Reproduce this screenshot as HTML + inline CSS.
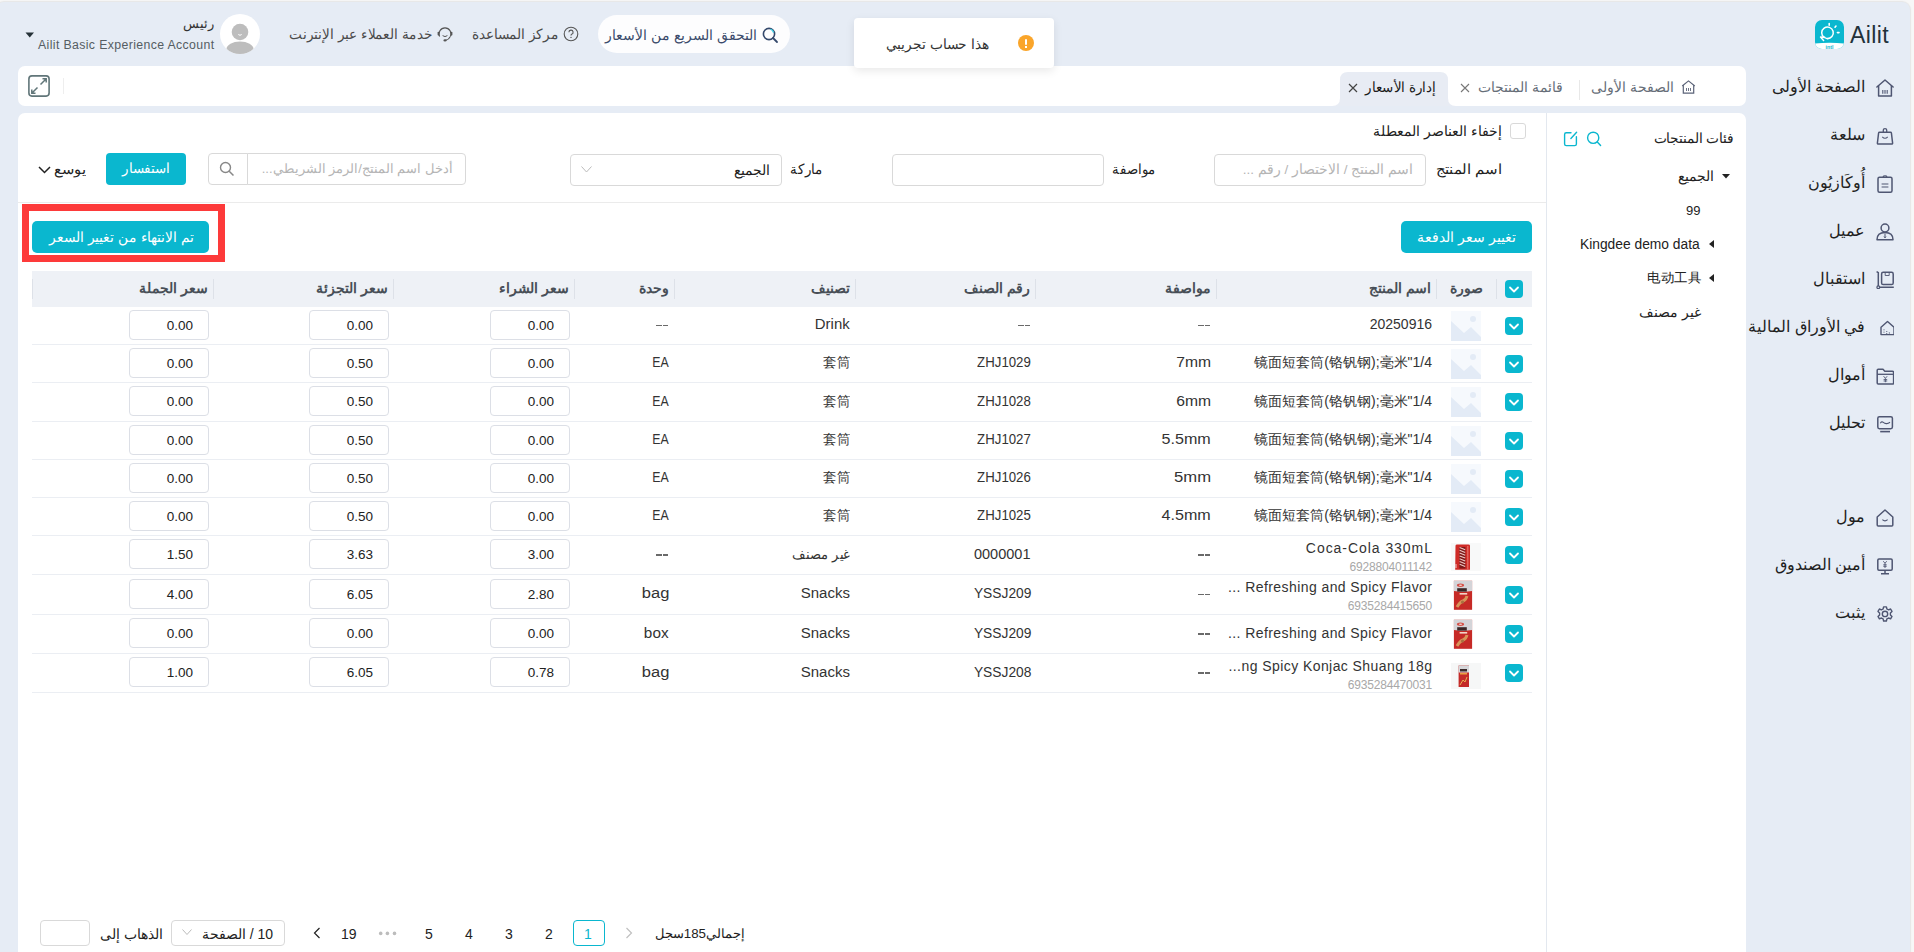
<!DOCTYPE html>
<html><head><meta charset="utf-8"><style>
*{box-sizing:border-box;margin:0;padding:0}
html,body{width:1914px;height:952px;overflow:hidden;background:#f7f7f7;font-family:"Liberation Sans", sans-serif;}
.a{position:absolute}
#app{position:absolute;left:-4px;top:2px;width:1914px;height:960px;background:#e6ecf5;border-radius:8px;box-shadow:0 0 1px 1px #e6e6e6;}
.t{position:absolute;white-space:nowrap;line-height:1;}
.r{direction:rtl;text-align:right}
.card{position:absolute;background:#fff}
.inp{position:absolute;background:#fff;border:1px solid #d9d9d9;border-radius:4px}
.btn{position:absolute;background:#0ab7cf;border-radius:4px;color:#fff}
.cb{position:absolute;width:18px;height:18px;background:#0ab7cf;border-radius:4px}
.sep{position:absolute;width:1px;background:#dde1e8}
</style></head>
<body><div id="app"></div>
<div class="a" style="left:1815px;top:20px;width:29px;height:29px;border-radius:7px;background:#0ab7cf;overflow:hidden">
<svg width="29" height="29" viewBox="0 0 29 29" style="position:absolute;left:0;top:0">
<path d="M9.2 17.6 A5.8 5.8 0 1 1 12 18.6" fill="none" stroke="#fff" stroke-width="1.5"/>
<path d="M9.3 16.5 Q9.5 18 12.5 18.8 M9.8 17.5 L5.5 17 L9 21" fill="none" stroke="#fff" stroke-width="1.4" stroke-linejoin="round"/>
<path d="M14.2 3.6 v1.6 M21 6 l-1 1.2 M24 12.6 h-1.6" stroke="#fff" stroke-width="1.6" stroke-linecap="round"/>
<path d="M0 23.5 Q14.5 21.8 29 23.5 V29 H0Z" fill="#fff"/>
<text x="14.5" y="28.6" font-size="5.2" font-family="Liberation Sans" font-weight="bold" fill="#0ab7cf" text-anchor="middle">intl</text>
</svg></div>
<div class="t" style="left:1850px;top:24px;font-size:23px;letter-spacing:0.4px;color:#22313a;">Ailit</div>
<div class="a" style="left:598px;top:15px;width:192px;height:38px;border-radius:19px;background:#fdfdfe"></div>
<svg class="a" style="left:762px;top:27px" width="17" height="17" viewBox="0 0 17 17"><circle cx="7" cy="7" r="5.6" fill="none" stroke="#34486b" stroke-width="1.6"/><path d="M8.5 2.2 A5 5 0 0 1 11.6 5.5" fill="none" stroke="#3ad0e6" stroke-width="1.4"/><path d="M11 11 L15 15" stroke="#34486b" stroke-width="1.8" stroke-linecap="round"/></svg>
<div class="t r" style="right:1157px;top:28px;font-size:14px;color:#3b4b6b;">التحقق السريع من الأسعار</div>
<svg class="a" style="left:563px;top:26px" width="16" height="16" viewBox="0 0 16 16"><circle cx="8" cy="8" r="6.8" fill="none" stroke="#555" stroke-width="1.1"/><path d="M5.9 6.2 A2.1 2.1 0 1 1 8.6 8.2 Q8 8.5 8 9.4" fill="none" stroke="#555" stroke-width="1.1"/><circle cx="8" cy="11.4" r="0.7" fill="#555"/></svg>
<div class="t r" style="right:1355px;top:27px;font-size:14px;color:#4a4a4a;transform:scaleX(0.976);transform-origin:100% 50%;">مركز المساعدة</div>
<svg class="a" style="left:437px;top:26px" width="17" height="17" viewBox="0 0 17 17"><path d="M2.6 10.5 A6 6 0 1 1 13.4 10.5" fill="none" stroke="#555" stroke-width="1.2"/><rect x="0.6" y="5.8" width="2" height="3.8" rx="0.8" fill="#555"/><rect x="13.4" y="5.8" width="2" height="3.8" rx="0.8" fill="#555"/><path d="M5.6 9.6 Q8 11.6 10.4 9.6" fill="none" stroke="#555" stroke-width="1"/><path d="M13.2 10.6 Q12 13.6 8.6 14.3" fill="none" stroke="#555" stroke-width="1.2"/><ellipse cx="8" cy="14.4" rx="1.6" ry="1.1" fill="#555"/></svg>
<div class="t r" style="right:1481px;top:27px;font-size:14px;color:#4a4a4a;transform:scaleX(0.973);transform-origin:100% 50%;">خدمة العملاء عبر الإنترنت</div>
<div class="a" style="left:220px;top:14px;width:40px;height:40px;border-radius:50%;background:#fff;overflow:hidden">
<svg width="40" height="40" viewBox="0 0 40 40"><circle cx="20" cy="18" r="8.3" fill="#bdbdbd"/><path d="M18.3 20.5 q1.7 1.6 3.4 0" stroke="#fff" stroke-width="1" fill="none"/><ellipse cx="20" cy="35" rx="13.5" ry="7.5" fill="#bdbdbd"/></svg></div>
<div class="t r" style="right:1700px;top:17px;font-size:13px;color:#333;">رئيس</div>
<div class="t" style="left:38px;top:39px;font-size:12.3px;color:#555d63;letter-spacing:0.37px">Ailit Basic Experience Account</div>
<svg class="a" style="left:25px;top:32px" width="10" height="6" viewBox="0 0 10 6"><path d="M0.5 0.5 H9 L4.75 5.5Z" fill="#263238"/></svg>
<div class="card" style="left:18px;top:66px;width:1728px;height:40px;border-radius:7px"></div>
<svg class="a" style="left:28px;top:75px" width="22" height="22" viewBox="0 0 22 22"><rect x="0.9" y="0.9" width="20.2" height="20.2" rx="3" fill="none" stroke="#617679" stroke-width="1.6"/><path d="M12.5 9.5 L18 4 M14.5 3.8 H18.2 V7.5 M9.5 12.5 L4 18 M3.8 14.5 V18.2 H7.5" fill="none" stroke="#617679" stroke-width="1.5"/></svg>
<div class="a" style="left:63px;top:78px;width:1px;height:16px;background:#eee"></div>
<svg class="a" style="left:1332px;top:72px" width="124" height="34" viewBox="0 0 124 34"><path d="M0 34 Q8 34 8 26 V8 Q8 0 16 0 H108 Q116 0 116 8 V26 Q116 34 124 34 Z" fill="#e8ecf4"/></svg>
<svg class="a" style="left:1348px;top:83px" width="10" height="10" viewBox="0 0 10 10"><path d="M1 1 L9 9 M9 1 L1 9" stroke="#444" stroke-width="1.2"/></svg>
<div class="t r" style="right:478px;top:80px;font-size:14px;color:#1a1a1a;transform:scaleX(0.960);transform-origin:100% 50%;">إدارة الأسعار</div>
<svg class="a" style="left:1460px;top:83px" width="10" height="10" viewBox="0 0 10 10"><path d="M1 1 L9 9 M9 1 L1 9" stroke="#777" stroke-width="1.1"/></svg>
<div class="t r" style="right:351px;top:80px;font-size:14px;color:#666e78;">قائمة المنتجات</div>
<div class="a" style="left:1579px;top:80px;width:1px;height:20px;background:#e8e8e8"></div>
<svg class="a" style="left:1681px;top:80px" width="15" height="14" viewBox="0 0 15 14"><path d="M1.2 6 L7.5 0.9 L13.8 6 M2.3 5.2 V13.2 H12.7 V5.2" fill="none" stroke="#5b6378" stroke-width="1.2"/><path d="M5.5 8 v3 M7.5 8 v3 M9.5 8 v3" stroke="#5b6378" stroke-width="0.9"/></svg>
<div class="t r" style="right:240px;top:80px;font-size:14px;color:#666e78;">الصفحة الأولى</div>
<svg class="a" style="left:1876px;top:79px" width="18" height="18" viewBox="0 0 18 18"><path d="M0.9 8 L9 1 L17.1 8" fill="none" stroke="#4f5672" stroke-width="1.5" stroke-linejoin="round" stroke-linecap="round"/><path d="M2.6 6.6 V17 H15.4 V6.6" fill="none" stroke="#4f5672" stroke-width="1.5" stroke-linejoin="round"/><path d="M6.8 11 v3.8 M9 11 v3.8 M11.2 11 v3.8" stroke="#4f5672" stroke-width="1.1"/></svg>
<div class="t r" style="right:49px;top:79px;font-size:16px;color:#1f1f1f;">الصفحة الأولى</div>
<svg class="a" style="left:1876px;top:127px" width="18" height="18" viewBox="0 0 18 18"><path d="M3.6 5.2 H14.4 Q15.3 5.2 15.4 6 L16.6 16 Q16.7 17 15.7 17 H2.3 Q1.3 17 1.4 16 L2.6 6 Q2.7 5.2 3.6 5.2Z" fill="none" stroke="#4f5672" stroke-width="1.5" stroke-linejoin="round"/><path d="M7.3 5.2 V3 Q7.3 1.6 9 1.6 Q10.7 1.6 10.7 3 V5.2" fill="none" stroke="#4f5672" stroke-width="1.3"/><path d="M6.3 9.8 Q9 12.6 11.7 9.8" fill="none" stroke="#4f5672" stroke-width="1.1"/></svg>
<div class="t r" style="right:49px;top:127px;font-size:16px;color:#1f1f1f;">سلعة</div>
<svg class="a" style="left:1876px;top:175px" width="18" height="18" viewBox="0 0 18 18"><rect x="2" y="2.2" width="14" height="15" rx="1.5" fill="none" stroke="#4f5672" stroke-width="1.5"/><path d="M7.3 2.5 V1.6 Q7.3 0.8 9 0.8 Q10.7 0.8 10.7 1.6 V2.5" fill="none" stroke="#4f5672" stroke-width="1.2"/><path d="M5.6 9 H12.4 M5.6 12 H12.4" stroke="#4f5672" stroke-width="1.2"/></svg>
<div class="t r" style="right:49px;top:175px;font-size:16px;color:#1f1f1f;">أُوكَازيُون</div>
<svg class="a" style="left:1876px;top:223px" width="18" height="18" viewBox="0 0 18 18"><circle cx="9" cy="5" r="3.9" fill="none" stroke="#4f5672" stroke-width="1.5"/><path d="M1 16.8 Q1 9.6 9 9.6 Q17 9.6 17 16.8 Z" fill="none" stroke="#4f5672" stroke-width="1.5" stroke-linejoin="round"/><path d="M9 10.5 V14.8 M8 13.6 L9 14.8 L10 13.6" fill="none" stroke="#4f5672" stroke-width="1"/></svg>
<div class="t r" style="right:49px;top:223px;font-size:16px;color:#1f1f1f;">عميل</div>
<svg class="a" style="left:1876px;top:271px" width="18" height="18" viewBox="0 0 18 18"><path d="M0.6 0.6 L2.3 1.6 V16.3 H17.8" fill="none" stroke="#4f5672" stroke-width="1.5"/><rect x="5.6" y="1.3" width="11.6" height="12.2" rx="1.6" fill="none" stroke="#4f5672" stroke-width="1.5"/><path d="M9.2 1.5 V4.5 H13.2 V1.5" fill="none" stroke="#4f5672" stroke-width="0.9"/><circle cx="2.3" cy="16.3" r="1.4" fill="#e6ecf5" stroke="#4f5672" stroke-width="1.2"/></svg>
<div class="t r" style="right:49px;top:271px;font-size:16px;color:#1f1f1f;">استقبال</div>
<svg class="a" style="left:1876px;top:319px" width="18" height="18" viewBox="0 0 18 18"><path d="M5 8.2 L11.5 2.4 L18 8.2 V15.6 H5 Z" fill="none" stroke="#4f5672" stroke-width="1.4" stroke-linejoin="round"/><path d="M8 10.5 v0.8 M8 12.8 v0.8 M10.7 12 v0.8 M10.7 14 v0.8 M13.4 13.6 v0.8" stroke="#4f5672" stroke-width="1.2"/></svg>
<div class="t r" style="right:49px;top:319px;font-size:16px;color:#1f1f1f;">في الأوراق المالية</div>
<svg class="a" style="left:1876px;top:367px" width="18" height="18" viewBox="0 0 18 18"><path d="M1.2 3.2 Q1.2 2.2 2.2 2.2 H7 L8.8 4.2 H16.4 Q17.6 4.2 17.6 5.4 V16 Q17.6 17 16.6 17 H2.2 Q1.2 17 1.2 16 Z" fill="none" stroke="#4f5672" stroke-width="1.5" stroke-linejoin="round"/><path d="M1.2 7.3 H17.6" stroke="#4f5672" stroke-width="1.3"/><path d="M7.6 9.2 L9.4 11.3 L11.2 9.2 M9.4 11.3 V15.2 M7.6 12.6 H11.2 M7.6 14 H11.2" fill="none" stroke="#4f5672" stroke-width="0.9"/></svg>
<div class="t r" style="right:49px;top:367px;font-size:16px;color:#1f1f1f;">أموال</div>
<svg class="a" style="left:1876px;top:415px" width="18" height="18" viewBox="0 0 18 18"><rect x="1.8" y="1.7" width="14.6" height="12" rx="1.6" fill="none" stroke="#4f5672" stroke-width="1.5"/><path d="M4.2 16.6 H14" stroke="#4f5672" stroke-width="1.6"/><path d="M4.3 8.2 Q5.8 6 7.3 7.4 T10.6 8.6 T14 7.2" fill="none" stroke="#4f5672" stroke-width="1.1"/></svg>
<div class="t r" style="right:49px;top:415px;font-size:16px;color:#1f1f1f;">تحليل</div>
<svg class="a" style="left:1876px;top:509px" width="18" height="18" viewBox="0 0 18 18"><path d="M1.2 8 L9 1 L16.8 8 V16 Q16.8 17 15.8 17 H2.2 Q1.2 17 1.2 16 Z" fill="none" stroke="#4f5672" stroke-width="1.5" stroke-linejoin="round"/><path d="M6.4 10.6 Q9 13.2 11.6 10.6" fill="none" stroke="#4f5672" stroke-width="1.1"/></svg>
<div class="t r" style="right:49px;top:509px;font-size:16px;color:#1f1f1f;">مول</div>
<svg class="a" style="left:1876px;top:557px" width="18" height="18" viewBox="0 0 18 18"><rect x="1.8" y="2" width="14.4" height="11.2" rx="1.2" fill="none" stroke="#4f5672" stroke-width="1.5"/><path d="M9 13.2 V16.6 M5 16.8 H13" stroke="#4f5672" stroke-width="1.5"/><path d="M7.3 4.2 L9 6.3 L10.7 4.2 M9 6.3 V11 M7.3 7.8 H10.7 M7.3 9.3 H10.7" fill="none" stroke="#4f5672" stroke-width="0.9"/></svg>
<div class="t r" style="right:49px;top:557px;font-size:16px;color:#1f1f1f;">أمين الصندوق</div>
<svg class="a" style="left:1876px;top:605px" width="18" height="18" viewBox="0 0 18 18"><path d="M7.6 0.9 H10.4 L10.9 3 L12.6 3.9 L14.6 3 L16 5.4 L14.4 6.9 V8.9 L16 10.4 L14.6 12.8 L12.6 12 L10.9 12.9 L10.4 15 H7.6 L7.1 12.9 L5.4 12 L3.4 12.8 L2 10.4 L3.6 8.9 V6.9 L2 5.4 L3.4 3 L5.4 3.9 L7.1 3 Z" transform="translate(0,1)" fill="none" stroke="#4f5672" stroke-width="1.4" stroke-linejoin="round"/><circle cx="9" cy="8.9" r="2.7" fill="none" stroke="#4f5672" stroke-width="1.4"/></svg>
<div class="t r" style="right:49px;top:605px;font-size:16px;color:#1f1f1f;">يثبت</div>
<div class="card" style="left:18px;top:113px;width:1728px;height:850px;border-radius:7px"></div>
<div class="a" style="left:1546px;top:113px;width:1px;height:840px;background:#e3e8ef"></div>
<div class="t r" style="right:180px;top:131px;font-size:14px;color:#222;transform:scaleX(0.980);transform-origin:100% 50%;">فئات المنتجات</div>
<svg class="a" style="left:1563px;top:131px" width="15" height="16" viewBox="0 0 15 16"><path d="M8 1.8 H3.3 Q1.6 1.8 1.6 3.5 V12.9 Q1.6 14.6 3.3 14.6 H11.7 Q13.4 14.6 13.4 12.9 V5.8" fill="none" stroke="#0ab7cf" stroke-width="1.4" stroke-linecap="round"/><path d="M7.9 7.5 L13.6 1.2" stroke="#0ab7cf" stroke-width="1.4" stroke-linecap="round"/></svg>
<svg class="a" style="left:1586px;top:131px" width="16" height="16" viewBox="0 0 16 16"><circle cx="7.2" cy="6.8" r="5.6" fill="none" stroke="#0ab7cf" stroke-width="1.4"/><path d="M11.3 10.9 L14.6 14.4" stroke="#0ab7cf" stroke-width="1.4" stroke-linecap="round"/></svg>
<svg class="a" style="left:1722px;top:174px" width="8" height="5" viewBox="0 0 8 5"><path d="M0 0 H8 L4 4.5Z" fill="#222"/></svg>
<div class="t r" style="right:200px;top:169px;font-size:14px;color:#222;">الجميع</div>
<div class="t" style="left:1686px;top:204px;font-size:13px;color:#222;">99</div>
<svg class="a" style="left:1709px;top:240px" width="5" height="8" viewBox="0 0 5 8"><path d="M5 0 V8 L0 4Z" fill="#222"/></svg>
<div class="t" style="left:1580px;top:238px;font-size:13.8px;color:#222;">Kingdee demo data</div>
<svg class="a" style="left:1709px;top:274px" width="5" height="8" viewBox="0 0 5 8"><path d="M5 0 V8 L0 4Z" fill="#222"/></svg>
<div class="t" style="left:1646.5px;top:271px;font-size:13.4px;color:#222;transform:scaleX(1.04);transform-origin:0 50%;">电动工具</div>
<div class="t r" style="right:213px;top:305px;font-size:14px;color:#222;">غير مصنف</div>
<div class="inp" style="left:1510px;top:123px;width:16px;height:16px;border-radius:3px"></div>
<div class="t r" style="right:412px;top:124px;font-size:14px;color:#222;">إخفاء العناصر المعطلة</div>
<div class="t r" style="right:412px;top:162px;font-size:14px;color:#222;transform:scaleX(1.072);transform-origin:100% 50%;">اسم المنتج</div>
<div class="inp" style="left:1214px;top:154px;width:212px;height:32px"></div>
<div class="t r" style="right:501px;top:163px;font-size:13.5px;color:#b5b5b5;">اسم المنتج / الاختصار / رقم ...</div>
<div class="t r" style="right:758px;top:162px;font-size:14px;color:#222;transform:scaleX(0.948);transform-origin:100% 50%;">مواصفة</div>
<div class="inp" style="left:892px;top:154px;width:212px;height:32px"></div>
<div class="t r" style="right:1091px;top:162px;font-size:14px;color:#222;transform:scaleX(0.959);transform-origin:100% 50%;">ماركة</div>
<div class="inp" style="left:570px;top:154px;width:212px;height:32px"></div>
<div class="t r" style="right:1144px;top:163px;font-size:14px;color:#222;">الجميع</div>
<svg class="a" style="left:581px;top:166px" width="11" height="7" viewBox="0 0 11 7"><path d="M0.5 0.5 L5.5 6 L10.5 0.5" fill="none" stroke="#bbb" stroke-width="1"/></svg>
<div class="inp" style="left:208px;top:153px;width:40px;height:32px;border-radius:4px 0 0 4px"></div>
<svg class="a" style="left:219px;top:161px" width="16" height="16" viewBox="0 0 16 16"><circle cx="6.5" cy="6.5" r="5" fill="none" stroke="#888" stroke-width="1.4"/><path d="M10.2 10.2 L14.5 14.5" stroke="#888" stroke-width="1.5"/></svg>
<div class="inp" style="left:247px;top:153px;width:219px;height:32px;border-radius:0 4px 4px 0"></div>
<div class="t r" style="right:1461px;top:162px;font-size:13px;color:#b5b5b5;">أدخل اسم المنتج/الرمز الشريطي...</div>
<div class="btn" style="left:106px;top:153px;width:80px;height:32px"></div>
<div class="t r" style="right:1744px;top:161px;font-size:14px;color:#fff;transform:scaleX(0.954);transform-origin:100% 50%;">استفسار</div>
<div class="t r" style="right:1828px;top:162px;font-size:14px;color:#222;transform:scaleX(1.057);transform-origin:100% 50%;">يوسع</div>
<svg class="a" style="left:38px;top:166px" width="13" height="8" viewBox="0 0 13 8"><path d="M1 1 L6.5 6.5 L12 1" fill="none" stroke="#222" stroke-width="1.5"/></svg>
<div class="a" style="left:18px;top:202px;width:1528px;height:1px;background:#ebebeb"></div>
<div class="a" style="left:22px;top:204px;width:203px;height:58px;border:7px solid #fd3a3a"></div>
<div class="btn" style="left:32px;top:221px;width:177px;height:32px;border-radius:5px"></div>
<div class="t r" style="right:1720px;top:230px;font-size:14px;color:#fff;transform:scaleX(0.984);transform-origin:100% 50%;">تم الانتهاء من تغيير السعر</div>
<div class="btn" style="left:1401px;top:221px;width:131px;height:32px;border-radius:5px"></div>
<div class="t r" style="right:398px;top:230px;font-size:14px;color:#fff;">تغيير سعر الدفعة</div>
<div class="a" style="left:32px;top:271px;width:1500px;height:36px;background:#eef1f6"></div>
<div class="sep" style="left:1496px;top:279px;height:20px"></div>
<div class="sep" style="left:1436px;top:279px;height:20px"></div>
<div class="sep" style="left:1216px;top:279px;height:20px"></div>
<div class="sep" style="left:1035px;top:279px;height:20px"></div>
<div class="sep" style="left:855px;top:279px;height:20px"></div>
<div class="sep" style="left:674px;top:279px;height:20px"></div>
<div class="sep" style="left:574px;top:279px;height:20px"></div>
<div class="sep" style="left:393px;top:279px;height:20px"></div>
<div class="sep" style="left:213px;top:279px;height:20px"></div>
<div class="sep" style="left:32px;top:279px;height:20px"></div>
<div class="cb" style="left:1505px;top:280px"><svg width="18" height="18" viewBox="0 0 18 18" style="position:absolute;left:0;top:0"><path d="M5 7.5 L9 11.5 L13 7.5" fill="none" stroke="#fff" stroke-width="1.8" stroke-linecap="round" stroke-linejoin="round"/></svg></div>
<div class="t" style="left:1436px;width:60px;text-align:center;top:281px;font-size:14px;font-weight:bold;color:#484f57;">صورة</div>
<div class="t r" style="right:483px;top:281px;font-size:14px;font-weight:bold;color:#484f57;">اسم المنتج</div>
<div class="t r" style="right:703px;top:281px;font-size:14px;font-weight:bold;color:#484f57;">مواصفة</div>
<div class="t r" style="right:884px;top:281px;font-size:14px;font-weight:bold;color:#484f57;">رقم الصنف</div>
<div class="t r" style="right:1064px;top:281px;font-size:14px;font-weight:bold;color:#484f57;">تصنيف</div>
<div class="t r" style="right:1245px;top:281px;font-size:14px;font-weight:bold;color:#484f57;">وحدة</div>
<div class="t r" style="right:1345px;top:281px;font-size:14px;font-weight:bold;color:#484f57;">سعر الشراء</div>
<div class="t r" style="right:1526px;top:281px;font-size:14px;font-weight:bold;color:#484f57;">سعر التجزئة</div>
<div class="t r" style="right:1706px;top:281px;font-size:14px;font-weight:bold;color:#484f57;">سعر الجملة</div>
<div class="a" style="left:32px;top:344px;width:1500px;height:1px;background:#ebeef3"></div>
<div class="cb" style="left:1505px;top:317px"><svg width="18" height="18" viewBox="0 0 18 18" style="position:absolute;left:0;top:0"><path d="M5 7.5 L9 11.5 L13 7.5" fill="none" stroke="#fff" stroke-width="1.8" stroke-linecap="round" stroke-linejoin="round"/></svg></div>
<div class="a" style="left:1451px;top:311px;width:30px;height:30px"><svg width="30" height="30" viewBox="0 0 30 30"><rect width="30" height="30" fill="#f6f9fd"/><path d="M0 10 L13 22 L20 16 L30 26 V30 H0Z" fill="#e3ebf6"/><circle cx="22" cy="8" r="3" fill="#e3ebf6"/></svg></div>
<div class="t" style="right:482.00px;top:317px;font-size:14px;color:#333;letter-spacing:0px">20250916</div>
<div class="a" style="left:1197.9px;top:324.5px;width:5.7px;height:1.6px;background:#6a6a6a"></div>
<div class="a" style="left:1204.8px;top:324.5px;width:5.7px;height:1.6px;background:#6a6a6a"></div>
<div class="a" style="left:1017.9px;top:324.5px;width:5.7px;height:1.6px;background:#6a6a6a"></div>
<div class="a" style="left:1024.8px;top:324.5px;width:5.7px;height:1.6px;background:#6a6a6a"></div>
<div class="t" style="right:1064px;top:317px;font-size:14px;color:#333;transform:scaleX(1.066);transform-origin:100% 50%;">Drink</div>
<div class="a" style="left:655.9px;top:324.5px;width:5.7px;height:1.6px;background:#6a6a6a"></div>
<div class="a" style="left:662.8px;top:324.5px;width:5.7px;height:1.6px;background:#6a6a6a"></div>
<div class="inp" style="left:490px;top:310px;width:80px;height:30px;border-color:#dcdfe6"></div>
<div class="t" style="right:1360px;top:319px;font-size:13.5px;color:#222;">0.00</div>
<div class="inp" style="left:309px;top:310px;width:80px;height:30px;border-color:#dcdfe6"></div>
<div class="t" style="right:1541px;top:319px;font-size:13.5px;color:#222;">0.00</div>
<div class="inp" style="left:129px;top:310px;width:80px;height:30px;border-color:#dcdfe6"></div>
<div class="t" style="right:1721px;top:319px;font-size:13.5px;color:#222;">0.00</div>
<div class="a" style="left:32px;top:382px;width:1500px;height:1px;background:#ebeef3"></div>
<div class="cb" style="left:1505px;top:355px"><svg width="18" height="18" viewBox="0 0 18 18" style="position:absolute;left:0;top:0"><path d="M5 7.5 L9 11.5 L13 7.5" fill="none" stroke="#fff" stroke-width="1.8" stroke-linecap="round" stroke-linejoin="round"/></svg></div>
<div class="a" style="left:1451px;top:349px;width:30px;height:30px"><svg width="30" height="30" viewBox="0 0 30 30"><rect width="30" height="30" fill="#f6f9fd"/><path d="M0 10 L13 22 L20 16 L30 26 V30 H0Z" fill="#e3ebf6"/><circle cx="22" cy="8" r="3" fill="#e3ebf6"/></svg></div>
<div class="t" style="right:482.00px;top:355px;font-size:14px;color:#333;letter-spacing:0px">镜面短套筒(铬钒钢);毫米"1/4</div>
<div class="t" style="right:703px;top:355px;font-size:14px;color:#333;transform:scaleX(1.12);transform-origin:100% 50%;">7mm</div>
<div class="t" style="right:883px;top:355px;font-size:14px;color:#333;transform:scaleX(0.945);transform-origin:100% 50%;">ZHJ1029</div>
<div class="t" style="right:1064px;top:355px;font-size:14px;color:#333;transform:scaleX(0.957);transform-origin:100% 50%;">套筒</div>
<div class="t" style="right:1245px;top:355px;font-size:14px;color:#333;transform:scaleX(0.88);transform-origin:100% 50%;">EA</div>
<div class="inp" style="left:490px;top:348px;width:80px;height:30px;border-color:#dcdfe6"></div>
<div class="t" style="right:1360px;top:357px;font-size:13.5px;color:#222;">0.00</div>
<div class="inp" style="left:309px;top:348px;width:80px;height:30px;border-color:#dcdfe6"></div>
<div class="t" style="right:1541px;top:357px;font-size:13.5px;color:#222;">0.50</div>
<div class="inp" style="left:129px;top:348px;width:80px;height:30px;border-color:#dcdfe6"></div>
<div class="t" style="right:1721px;top:357px;font-size:13.5px;color:#222;">0.00</div>
<div class="a" style="left:32px;top:421px;width:1500px;height:1px;background:#ebeef3"></div>
<div class="cb" style="left:1505px;top:393px"><svg width="18" height="18" viewBox="0 0 18 18" style="position:absolute;left:0;top:0"><path d="M5 7.5 L9 11.5 L13 7.5" fill="none" stroke="#fff" stroke-width="1.8" stroke-linecap="round" stroke-linejoin="round"/></svg></div>
<div class="a" style="left:1451px;top:387px;width:30px;height:30px"><svg width="30" height="30" viewBox="0 0 30 30"><rect width="30" height="30" fill="#f6f9fd"/><path d="M0 10 L13 22 L20 16 L30 26 V30 H0Z" fill="#e3ebf6"/><circle cx="22" cy="8" r="3" fill="#e3ebf6"/></svg></div>
<div class="t" style="right:482.00px;top:394px;font-size:14px;color:#333;letter-spacing:0px">镜面短套筒(铬钒钢);毫米"1/4</div>
<div class="t" style="right:703px;top:394px;font-size:14px;color:#333;transform:scaleX(1.12);transform-origin:100% 50%;">6mm</div>
<div class="t" style="right:883px;top:394px;font-size:14px;color:#333;transform:scaleX(0.945);transform-origin:100% 50%;">ZHJ1028</div>
<div class="t" style="right:1064px;top:394px;font-size:14px;color:#333;transform:scaleX(0.957);transform-origin:100% 50%;">套筒</div>
<div class="t" style="right:1245px;top:394px;font-size:14px;color:#333;transform:scaleX(0.88);transform-origin:100% 50%;">EA</div>
<div class="inp" style="left:490px;top:386px;width:80px;height:30px;border-color:#dcdfe6"></div>
<div class="t" style="right:1360px;top:395px;font-size:13.5px;color:#222;">0.00</div>
<div class="inp" style="left:309px;top:386px;width:80px;height:30px;border-color:#dcdfe6"></div>
<div class="t" style="right:1541px;top:395px;font-size:13.5px;color:#222;">0.50</div>
<div class="inp" style="left:129px;top:386px;width:80px;height:30px;border-color:#dcdfe6"></div>
<div class="t" style="right:1721px;top:395px;font-size:13.5px;color:#222;">0.00</div>
<div class="a" style="left:32px;top:459px;width:1500px;height:1px;background:#ebeef3"></div>
<div class="cb" style="left:1505px;top:432px"><svg width="18" height="18" viewBox="0 0 18 18" style="position:absolute;left:0;top:0"><path d="M5 7.5 L9 11.5 L13 7.5" fill="none" stroke="#fff" stroke-width="1.8" stroke-linecap="round" stroke-linejoin="round"/></svg></div>
<div class="a" style="left:1451px;top:426px;width:30px;height:30px"><svg width="30" height="30" viewBox="0 0 30 30"><rect width="30" height="30" fill="#f6f9fd"/><path d="M0 10 L13 22 L20 16 L30 26 V30 H0Z" fill="#e3ebf6"/><circle cx="22" cy="8" r="3" fill="#e3ebf6"/></svg></div>
<div class="t" style="right:482.00px;top:432px;font-size:14px;color:#333;letter-spacing:0px">镜面短套筒(铬钒钢);毫米"1/4</div>
<div class="t" style="right:703px;top:432px;font-size:14px;color:#333;transform:scaleX(1.15);transform-origin:100% 50%;">5.5mm</div>
<div class="t" style="right:883px;top:432px;font-size:14px;color:#333;transform:scaleX(0.945);transform-origin:100% 50%;">ZHJ1027</div>
<div class="t" style="right:1064px;top:432px;font-size:14px;color:#333;transform:scaleX(0.957);transform-origin:100% 50%;">套筒</div>
<div class="t" style="right:1245px;top:432px;font-size:14px;color:#333;transform:scaleX(0.88);transform-origin:100% 50%;">EA</div>
<div class="inp" style="left:490px;top:425px;width:80px;height:30px;border-color:#dcdfe6"></div>
<div class="t" style="right:1360px;top:434px;font-size:13.5px;color:#222;">0.00</div>
<div class="inp" style="left:309px;top:425px;width:80px;height:30px;border-color:#dcdfe6"></div>
<div class="t" style="right:1541px;top:434px;font-size:13.5px;color:#222;">0.50</div>
<div class="inp" style="left:129px;top:425px;width:80px;height:30px;border-color:#dcdfe6"></div>
<div class="t" style="right:1721px;top:434px;font-size:13.5px;color:#222;">0.00</div>
<div class="a" style="left:32px;top:497px;width:1500px;height:1px;background:#ebeef3"></div>
<div class="cb" style="left:1505px;top:470px"><svg width="18" height="18" viewBox="0 0 18 18" style="position:absolute;left:0;top:0"><path d="M5 7.5 L9 11.5 L13 7.5" fill="none" stroke="#fff" stroke-width="1.8" stroke-linecap="round" stroke-linejoin="round"/></svg></div>
<div class="a" style="left:1451px;top:464px;width:30px;height:30px"><svg width="30" height="30" viewBox="0 0 30 30"><rect width="30" height="30" fill="#f6f9fd"/><path d="M0 10 L13 22 L20 16 L30 26 V30 H0Z" fill="#e3ebf6"/><circle cx="22" cy="8" r="3" fill="#e3ebf6"/></svg></div>
<div class="t" style="right:482.00px;top:470px;font-size:14px;color:#333;letter-spacing:0px">镜面短套筒(铬钒钢);毫米"1/4</div>
<div class="t" style="right:703px;top:470px;font-size:14px;color:#333;transform:scaleX(1.19);transform-origin:100% 50%;">5mm</div>
<div class="t" style="right:883px;top:470px;font-size:14px;color:#333;transform:scaleX(0.945);transform-origin:100% 50%;">ZHJ1026</div>
<div class="t" style="right:1064px;top:470px;font-size:14px;color:#333;transform:scaleX(0.957);transform-origin:100% 50%;">套筒</div>
<div class="t" style="right:1245px;top:470px;font-size:14px;color:#333;transform:scaleX(0.88);transform-origin:100% 50%;">EA</div>
<div class="inp" style="left:490px;top:463px;width:80px;height:30px;border-color:#dcdfe6"></div>
<div class="t" style="right:1360px;top:472px;font-size:13.5px;color:#222;">0.00</div>
<div class="inp" style="left:309px;top:463px;width:80px;height:30px;border-color:#dcdfe6"></div>
<div class="t" style="right:1541px;top:472px;font-size:13.5px;color:#222;">0.50</div>
<div class="inp" style="left:129px;top:463px;width:80px;height:30px;border-color:#dcdfe6"></div>
<div class="t" style="right:1721px;top:472px;font-size:13.5px;color:#222;">0.00</div>
<div class="a" style="left:32px;top:535px;width:1500px;height:1px;background:#ebeef3"></div>
<div class="cb" style="left:1505px;top:508px"><svg width="18" height="18" viewBox="0 0 18 18" style="position:absolute;left:0;top:0"><path d="M5 7.5 L9 11.5 L13 7.5" fill="none" stroke="#fff" stroke-width="1.8" stroke-linecap="round" stroke-linejoin="round"/></svg></div>
<div class="a" style="left:1451px;top:502px;width:30px;height:30px"><svg width="30" height="30" viewBox="0 0 30 30"><rect width="30" height="30" fill="#f6f9fd"/><path d="M0 10 L13 22 L20 16 L30 26 V30 H0Z" fill="#e3ebf6"/><circle cx="22" cy="8" r="3" fill="#e3ebf6"/></svg></div>
<div class="t" style="right:482.00px;top:508px;font-size:14px;color:#333;letter-spacing:0px">镜面短套筒(铬钒钢);毫米"1/4</div>
<div class="t" style="right:703px;top:508px;font-size:14px;color:#333;transform:scaleX(1.15);transform-origin:100% 50%;">4.5mm</div>
<div class="t" style="right:883px;top:508px;font-size:14px;color:#333;transform:scaleX(0.945);transform-origin:100% 50%;">ZHJ1025</div>
<div class="t" style="right:1064px;top:508px;font-size:14px;color:#333;transform:scaleX(0.957);transform-origin:100% 50%;">套筒</div>
<div class="t" style="right:1245px;top:508px;font-size:14px;color:#333;transform:scaleX(0.88);transform-origin:100% 50%;">EA</div>
<div class="inp" style="left:490px;top:501px;width:80px;height:30px;border-color:#dcdfe6"></div>
<div class="t" style="right:1360px;top:510px;font-size:13.5px;color:#222;">0.00</div>
<div class="inp" style="left:309px;top:501px;width:80px;height:30px;border-color:#dcdfe6"></div>
<div class="t" style="right:1541px;top:510px;font-size:13.5px;color:#222;">0.50</div>
<div class="inp" style="left:129px;top:501px;width:80px;height:30px;border-color:#dcdfe6"></div>
<div class="t" style="right:1721px;top:510px;font-size:13.5px;color:#222;">0.00</div>
<div class="a" style="left:32px;top:574px;width:1500px;height:1px;background:#ebeef3"></div>
<div class="cb" style="left:1505px;top:546px"><svg width="18" height="18" viewBox="0 0 18 18" style="position:absolute;left:0;top:0"><path d="M5 7.5 L9 11.5 L13 7.5" fill="none" stroke="#fff" stroke-width="1.8" stroke-linecap="round" stroke-linejoin="round"/></svg></div>
<div class="a" style="left:1451px;top:543px;width:30px;height:28px"><svg width="30" height="28" viewBox="0 0 30 28"><rect width="30" height="28" fill="#f8f9f9"/><path d="M4.5 2.8 Q4.5 1.6 6 1.6 H17.5 Q19 1.6 19 2.8 V26.8 H4.2 Z" fill="#cf2b27"/><path d="M16.8 3 V26.5" stroke="#e8726a" stroke-width="1.2"/><rect x="8.4" y="4" width="6" height="21.5" fill="#7c1a1a"/><path d="M8.6 4.5 L14.2 6.7 M8.6 7.3 L14.2 9.5 M8.6 10.1 L14.2 12.3 M8.6 12.9 L14.2 15.1 M8.6 15.7 L14.2 17.9 M8.6 18.5 L14.2 20.7 M8.6 21.3 L14.2 23.5" stroke="#f0c8c4" stroke-width="1.1"/><path d="M5 21 v4" stroke="#f3dede" stroke-width="0.9"/></svg></div>
<div class="t" style="right:481.05px;top:541px;font-size:14px;color:#333;letter-spacing:0.95px">Coca-Cola 330mL</div>
<div class="t" style="right:482px;top:561px;font-size:12px;color:#a8a8a8;letter-spacing:-0.2px">6928804011142</div>
<div class="a" style="left:1197.9px;top:554.0px;width:5.7px;height:1.6px;background:#6a6a6a"></div>
<div class="a" style="left:1204.8px;top:554.0px;width:5.7px;height:1.6px;background:#6a6a6a"></div>
<div class="t" style="right:883px;top:547px;font-size:14px;color:#333;transform:scaleX(1.038);transform-origin:100% 50%;">0000001</div>
<div class="t r" style="right:1064px;top:547px;font-size:14px;color:#333;transform:scaleX(0.93);transform-origin:100% 50%;">غير مصنف</div>
<div class="a" style="left:655.9px;top:554.0px;width:5.7px;height:1.6px;background:#6a6a6a"></div>
<div class="a" style="left:662.8px;top:554.0px;width:5.7px;height:1.6px;background:#6a6a6a"></div>
<div class="inp" style="left:490px;top:539px;width:80px;height:30px;border-color:#dcdfe6"></div>
<div class="t" style="right:1360px;top:548px;font-size:13.5px;color:#222;">3.00</div>
<div class="inp" style="left:309px;top:539px;width:80px;height:30px;border-color:#dcdfe6"></div>
<div class="t" style="right:1541px;top:548px;font-size:13.5px;color:#222;">3.63</div>
<div class="inp" style="left:129px;top:539px;width:80px;height:30px;border-color:#dcdfe6"></div>
<div class="t" style="right:1721px;top:548px;font-size:13.5px;color:#222;">1.50</div>
<div class="a" style="left:32px;top:614px;width:1500px;height:1px;background:#ebeef3"></div>
<div class="cb" style="left:1505px;top:586px"><svg width="18" height="18" viewBox="0 0 18 18" style="position:absolute;left:0;top:0"><path d="M5 7.5 L9 11.5 L13 7.5" fill="none" stroke="#fff" stroke-width="1.8" stroke-linecap="round" stroke-linejoin="round"/></svg></div>
<div class="a" style="left:1451px;top:580px;width:30px;height:30px"><svg width="30" height="30" viewBox="0 0 30 30"><rect width="30" height="30" fill="#fff"/><rect x="2.9" y="0.8" width="18.2" height="29" fill="#c62a26"/><path d="M2.9 0.8 H21.1 V11 Q12 12.6 2.9 11 Z" fill="#d4d4d8"/><ellipse cx="9.5" cy="5.2" rx="3.6" ry="1.7" fill="#d45048"/><ellipse cx="9.5" cy="5.2" rx="1.6" ry="0.8" fill="#f0d0c8"/><rect x="6.2" y="8.2" width="9.6" height="3.4" fill="#3a2626"/><rect x="8.6" y="13" width="7.6" height="1.6" fill="#f2d6c8"/><path d="M6 27 Q9 22 12 21 T16 16" stroke="#d8955a" stroke-width="3" fill="none"/><circle cx="11.5" cy="22" r="1.6" fill="#a87040"/></svg></div>
<div class="t" style="right:481.58px;top:580px;font-size:14px;color:#333;letter-spacing:0.42px">... Refreshing and Spicy Flavor</div>
<div class="t" style="right:482px;top:600px;font-size:12px;color:#a8a8a8;letter-spacing:-0.2px">6935284415650</div>
<div class="a" style="left:1197.9px;top:593.5px;width:5.7px;height:1.6px;background:#6a6a6a"></div>
<div class="a" style="left:1204.8px;top:593.5px;width:5.7px;height:1.6px;background:#6a6a6a"></div>
<div class="t" style="right:883px;top:586px;font-size:14px;color:#333;transform:scaleX(0.984);transform-origin:100% 50%;">YSSJ209</div>
<div class="t" style="right:1064px;top:586px;font-size:14px;color:#333;transform:scaleX(1.072);transform-origin:100% 50%;">Snacks</div>
<div class="t" style="right:1245px;top:586px;font-size:14px;color:#333;transform:scaleX(1.18);transform-origin:100% 50%;">bag</div>
<div class="inp" style="left:490px;top:579px;width:80px;height:30px;border-color:#dcdfe6"></div>
<div class="t" style="right:1360px;top:588px;font-size:13.5px;color:#222;">2.80</div>
<div class="inp" style="left:309px;top:579px;width:80px;height:30px;border-color:#dcdfe6"></div>
<div class="t" style="right:1541px;top:588px;font-size:13.5px;color:#222;">6.05</div>
<div class="inp" style="left:129px;top:579px;width:80px;height:30px;border-color:#dcdfe6"></div>
<div class="t" style="right:1721px;top:588px;font-size:13.5px;color:#222;">4.00</div>
<div class="a" style="left:32px;top:653px;width:1500px;height:1px;background:#ebeef3"></div>
<div class="cb" style="left:1505px;top:625px"><svg width="18" height="18" viewBox="0 0 18 18" style="position:absolute;left:0;top:0"><path d="M5 7.5 L9 11.5 L13 7.5" fill="none" stroke="#fff" stroke-width="1.8" stroke-linecap="round" stroke-linejoin="round"/></svg></div>
<div class="a" style="left:1451px;top:619px;width:30px;height:30px"><svg width="30" height="30" viewBox="0 0 30 30"><rect width="30" height="30" fill="#fff"/><rect x="2.9" y="0.8" width="18.2" height="29" fill="#c62a26"/><path d="M2.9 0.8 H21.1 V11 Q12 12.6 2.9 11 Z" fill="#d4d4d8"/><ellipse cx="9.5" cy="5.2" rx="3.6" ry="1.7" fill="#d45048"/><ellipse cx="9.5" cy="5.2" rx="1.6" ry="0.8" fill="#f0d0c8"/><rect x="6.2" y="8.2" width="9.6" height="3.4" fill="#3a2626"/><rect x="8.6" y="13" width="7.6" height="1.6" fill="#f2d6c8"/><path d="M6 27 Q9 22 12 21 T16 16" stroke="#d8955a" stroke-width="3" fill="none"/><circle cx="11.5" cy="22" r="1.6" fill="#a87040"/></svg></div>
<div class="t" style="right:481.58px;top:626px;font-size:14px;color:#333;letter-spacing:0.42px">... Refreshing and Spicy Flavor</div>
<div class="a" style="left:1197.9px;top:633.0px;width:5.7px;height:1.6px;background:#6a6a6a"></div>
<div class="a" style="left:1204.8px;top:633.0px;width:5.7px;height:1.6px;background:#6a6a6a"></div>
<div class="t" style="right:883px;top:626px;font-size:14px;color:#333;transform:scaleX(0.984);transform-origin:100% 50%;">YSSJ209</div>
<div class="t" style="right:1064px;top:626px;font-size:14px;color:#333;transform:scaleX(1.072);transform-origin:100% 50%;">Snacks</div>
<div class="t" style="right:1245px;top:626px;font-size:14px;color:#333;transform:scaleX(1.095);transform-origin:100% 50%;">box</div>
<div class="inp" style="left:490px;top:618px;width:80px;height:30px;border-color:#dcdfe6"></div>
<div class="t" style="right:1360px;top:627px;font-size:13.5px;color:#222;">0.00</div>
<div class="inp" style="left:309px;top:618px;width:80px;height:30px;border-color:#dcdfe6"></div>
<div class="t" style="right:1541px;top:627px;font-size:13.5px;color:#222;">0.00</div>
<div class="inp" style="left:129px;top:618px;width:80px;height:30px;border-color:#dcdfe6"></div>
<div class="t" style="right:1721px;top:627px;font-size:13.5px;color:#222;">0.00</div>
<div class="a" style="left:32px;top:692px;width:1500px;height:1px;background:#ebeef3"></div>
<div class="cb" style="left:1505px;top:664px"><svg width="18" height="18" viewBox="0 0 18 18" style="position:absolute;left:0;top:0"><path d="M5 7.5 L9 11.5 L13 7.5" fill="none" stroke="#fff" stroke-width="1.8" stroke-linecap="round" stroke-linejoin="round"/></svg></div>
<div class="a" style="left:1451px;top:663px;width:30px;height:26px"><svg width="30" height="26" viewBox="0 0 30 26"><rect width="30" height="26" fill="#f6f7f7"/><rect x="7.6" y="2.5" width="10.4" height="21.5" fill="#c42a28"/><rect x="7.6" y="2.5" width="10.4" height="7" fill="#d7d7da"/><rect x="9" y="6" width="7" height="2.5" fill="#3a2a2a"/><rect x="9" y="10" width="7" height="1.5" fill="#e8a040"/><path d="M9 22 l3 -5 l2 2 l2 -5" stroke="#e8b050" stroke-width="1" fill="none"/></svg></div>
<div class="t" style="right:481.57px;top:659px;font-size:14px;color:#333;letter-spacing:0.43px">...ng Spicy Konjac Shuang 18g</div>
<div class="t" style="right:482px;top:679px;font-size:12px;color:#a8a8a8;letter-spacing:-0.2px">6935284470031</div>
<div class="a" style="left:1197.9px;top:672.0px;width:5.7px;height:1.6px;background:#6a6a6a"></div>
<div class="a" style="left:1204.8px;top:672.0px;width:5.7px;height:1.6px;background:#6a6a6a"></div>
<div class="t" style="right:883px;top:665px;font-size:14px;color:#333;transform:scaleX(0.984);transform-origin:100% 50%;">YSSJ208</div>
<div class="t" style="right:1064px;top:665px;font-size:14px;color:#333;transform:scaleX(1.072);transform-origin:100% 50%;">Snacks</div>
<div class="t" style="right:1245px;top:665px;font-size:14px;color:#333;transform:scaleX(1.18);transform-origin:100% 50%;">bag</div>
<div class="inp" style="left:490px;top:657px;width:80px;height:30px;border-color:#dcdfe6"></div>
<div class="t" style="right:1360px;top:666px;font-size:13.5px;color:#222;">0.78</div>
<div class="inp" style="left:309px;top:657px;width:80px;height:30px;border-color:#dcdfe6"></div>
<div class="t" style="right:1541px;top:666px;font-size:13.5px;color:#222;">6.05</div>
<div class="inp" style="left:129px;top:657px;width:80px;height:30px;border-color:#dcdfe6"></div>
<div class="t" style="right:1721px;top:666px;font-size:13.5px;color:#222;">1.00</div>
<div class="t r" style="right:1169px;top:927px;font-size:13.3px;color:#222;">إجمالي185سجل</div>
<svg class="a" style="left:625px;top:927px" width="8" height="12" viewBox="0 0 8 12"><path d="M1.5 1 L6.5 6 L1.5 11" fill="none" stroke="#c0c0c0" stroke-width="1.2"/></svg>
<div class="a" style="left:573px;top:920px;width:32px;height:26px;border:1px solid #0ab7cf;border-radius:4px"></div>
<div class="t" style="left:584px;top:927px;font-size:14px;color:#0ab7cf;">1</div>
<div class="t" style="left:545px;top:927px;font-size:14px;color:#222;">2</div>
<div class="t" style="left:505px;top:927px;font-size:14px;color:#222;">3</div>
<div class="t" style="left:465px;top:927px;font-size:14px;color:#222;">4</div>
<div class="t" style="left:425px;top:927px;font-size:14px;color:#222;">5</div>
<div class="t" style="left:341px;top:927px;font-size:14px;color:#222;">19</div>
<svg class="a" style="left:377px;top:930px" width="21" height="7" viewBox="0 0 21 7"><circle cx="3.7" cy="3.4" r="1.8" fill="#bcbcbc"/><circle cx="10.4" cy="3.4" r="1.8" fill="#bcbcbc"/><circle cx="17.5" cy="3.4" r="1.8" fill="#bcbcbc"/></svg>
<svg class="a" style="left:313px;top:927px" width="8" height="12" viewBox="0 0 8 12"><path d="M6.5 1 L1.5 6 L6.5 11" fill="none" stroke="#222" stroke-width="1.2"/></svg>
<div class="inp" style="left:171px;top:920px;width:114px;height:26px"></div>
<div class="t r" style="right:1641px;top:927px;font-size:14px;color:#222;">10 / الصفحة</div>
<svg class="a" style="left:182px;top:929px" width="10" height="6" viewBox="0 0 10 6"><path d="M0.5 0.5 L5 5.5 L9.5 0.5" fill="none" stroke="#bbb" stroke-width="1"/></svg>
<div class="t r" style="right:1751px;top:927px;font-size:14px;color:#222;">الذهاب إلى</div>
<div class="inp" style="left:40px;top:920px;width:50px;height:26px"></div>
<div class="a" style="left:854px;top:18px;width:200px;height:50px;background:#fff;border-radius:4px;box-shadow:0 3px 10px rgba(0,0,0,0.09)"></div>
<div class="a" style="left:1018px;top:35px;width:16px;height:16px;border-radius:50%;background:#faa52a"></div>
<div class="a" style="left:1025.2px;top:38.5px;width:1.6px;height:6px;background:#fff;border-radius:1px"></div><div class="a" style="left:1025.2px;top:45.8px;width:1.6px;height:1.8px;background:#fff"></div>
<div class="t r" style="right:925px;top:37px;font-size:14px;color:#333;transform:scaleX(0.984);transform-origin:100% 50%;">هذا حساب تجريبي</div>
</body></html>
